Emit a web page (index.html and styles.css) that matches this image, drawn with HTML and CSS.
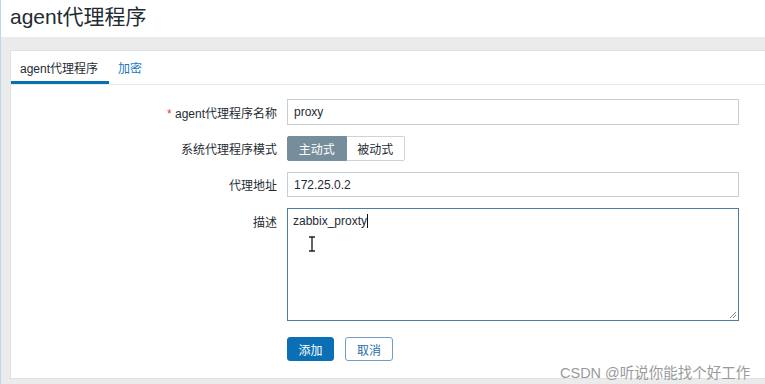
FILE: index.html
```html
<!DOCTYPE html>
<html lang="zh">
<head>
<meta charset="utf-8">
<link rel="stylesheet" href="styles.css">
</head>
<body>
<div class="page">
  <header class="header"><h1 class="title">agent代理程序</h1></header>
  <main class="main">
    <section class="panel">
      <nav class="tabs">
        <span class="tab active">agent代理程序</span>
        <span class="tab link">加密</span>
      </nav>
      <form class="form">
        <label class="label"><span class="req">*</span> agent代理程序名称</label>
        <div class="field input">proxy</div>

        <label class="label">系统代理程序模式</label>
        <div class="field seg">
          <span class="seg-btn on">主动式</span><span class="seg-btn">被动式</span>
        </div>

        <label class="label">代理地址</label>
        <div class="field input">172.25.0.2</div>

        <label class="label top">描述</label>
        <div class="field area">
          <span class="area-text">zabbix_proxty</span><span class="caret"></span>
          <svg class="ibeam" width="8" height="16" viewBox="0 0 8 16"><path d="M1 1h6M4 1v14M1 15h6" stroke="#222" stroke-width="1.4" fill="none"/></svg>
          <svg class="grip" width="8" height="8" viewBox="0 0 8 8"><path d="M7 1L1 7M7 4L4 7" stroke="#888" stroke-width="1" fill="none"/></svg>
        </div>

        <span></span>
        <div class="actions">
          <span class="btn primary">添加</span>
          <span class="btn ghost">取消</span>
        </div>
      </form>
    </section>
  </main>
  <div class="watermark">CSDN @听说你能找个好工作</div>
</div>
</body>
</html>
```

FILE: styles.css
```css
* { box-sizing: border-box; }
html, body { margin: 0; padding: 0; }
body {
  width: 765px;
  height: 384px;
  overflow: hidden;
  background: #ebebeb;
  font-family: "Liberation Sans", Arial, "Noto Sans CJK SC", sans-serif;
  color: #1f2c33;
}
.page {
  position: relative;
  height: 384px;
  border-left: 1px solid #b9d7ee;
  display: flex;
  flex-direction: column;
}
.header {
  background: #fff;
  height: 37px;
  padding-left: 9px;
}
.title {
  margin: 0;
  font-weight: normal;
  font-size: 21px;
  line-height: 33px;
  color: #1f2c33;
}
.main {
  padding: 13px 0 5px 9px;
  flex: 1;
  display: flex;
}
.panel {
  flex: 1;
  background: #fff;
  border: 1px solid #dde2e5;
  border-right: none;
  display: flex;
  flex-direction: column;
}
.tabs {
  height: 34px;
  border-bottom: 1px solid #e6eaec;
  display: flex;
  align-items: stretch;
}
.tab {
  font-size: 12px;
  display: flex;
  align-items: center;
  padding: 0 9px;
}
.tab.active {
  width: 98px;
  border-bottom: 3px solid #0a6fb0;
  padding-top: 3px;
  color: #1f2c33;
}
.tab.link {
  color: #1a78c2;
  padding-left: 9px;
}
.form {
  display: grid;
  grid-template-columns: 266px 452px;
  grid-template-rows: 26px 25px 25px 113px 24px;
  column-gap: 10px;
  row-gap: 11px;
  padding-top: 14px;
}
.label {
  font-size: 12px;
  text-align: right;
  align-self: center;
  color: #1f2c33;
}
.label.top {
  align-self: start;
  padding-top: 5px;
}
.req { color: #d64541; }
.field {
  font-size: 12px;
  color: #1f2c33;
}
.input {
  border: 1px solid #c8cfd4;
  display: flex;
  align-items: center;
  padding-left: 6px;
}
.seg {
  display: flex;
  width: 118px;
}
.seg-btn {
  flex: 1;
  display: flex;
  align-items: center;
  justify-content: center;
  border: 1px solid #cdd4d8;
  font-size: 12px;
  color: #1f2c33;
  background: #fff;
}
.seg-btn.on {
  background: #768d9b;
  border-color: #768d9b;
  color: #fff;
  border-radius: 2px 0 0 2px;
}
.seg-btn:last-child { border-left: none; border-radius: 0 2px 2px 0; }
.area {
  position: relative;
  border: 1px solid #4f7ea3;
  padding: 5px 5px;
}
.area-text { font-size: 12px; }
.caret {
  display: inline-block;
  width: 1px;
  height: 14px;
  background: #111;
  vertical-align: -3px;
}
.ibeam { position: absolute; left: 20px; top: 27px; }
.grip { position: absolute; right: 1px; bottom: 1px; }
.actions {
  display: flex;
  gap: 11px;
  margin-top: 5px;
}
.btn {
  width: 47px;
  height: 24px;
  border-radius: 3px;
  font-size: 12px;
  display: flex;
  align-items: center;
  justify-content: center;
}
.btn.primary {
  background: #0a6fb4;
  color: #fff;
  border: 1px solid #0a6fb4;
}
.btn.ghost {
  background: #fff;
  color: #1f6ea8;
  border: 1px solid #6f9fc6;
  width: 48px;
}
.watermark {
  position: absolute;
  left: 559px;
  top: 361px;
  font-size: 14.5px;
  color: #9a9a9a;
  font-family: "Liberation Sans", "Noto Sans CJK SC", sans-serif;
  white-space: nowrap;
}
```
